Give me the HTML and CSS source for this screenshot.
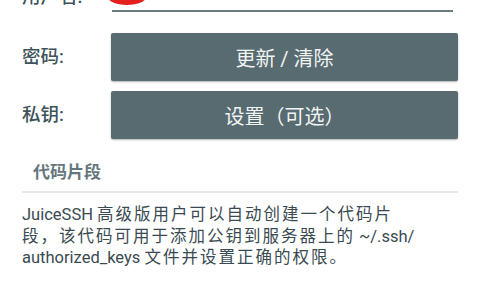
FILE: index.html
```html
<!DOCTYPE html>
<html lang="zh-CN">
<head>
<meta charset="utf-8">
<link rel="stylesheet" href="styles.css">
</head>
<body>
<div class="screen">
  <div class="row user">
    <div class="label">用户名:</div>
    <div class="field"><span class="redact"></span></div>
  </div>
  <div class="row">
    <div class="label">密码:</div>
    <button class="btn">更新 / 清除</button>
  </div>
  <div class="row">
    <div class="label">私钥:</div>
    <button class="btn">设置（可选）</button>
  </div>
  <div class="section">代码片段</div>
  <p class="desc">JuiceSSH <span class="cjk">高级版用户可以自动创建一个代码片</span><br><span class="cjk">段，该代码可用于添加公钥到服务器上的</span> ~/.ssh/<br>authorized_keys <span class="cjk">文件并设置正确的权限。</span></p>
  <button class="btn wide"></button>
</div>
</body>
</html>
```
FILE: styles.css
```css
html, body {
  margin: 0;
  padding: 0;
  background: #ffffff;
  overflow: hidden;
}
.screen {
  width: 480px;
  height: 300px;
  padding: 0 22px;
  box-sizing: border-box;
  font-family: Roboto, "Noto Sans CJK SC", sans-serif;
}
.row {
  display: grid;
  grid-template-columns: 89px 1fr;
  align-items: center;
  margin-bottom: 10px;
}
.row.user {
  height: 38px;
  margin-top: -26px;
  margin-bottom: 21px;
  align-items: stretch;
}
.label {
  font-size: 18.5px;
  line-height: 22px;
  color: #3f535b;
  font-weight: 500;
}
.user .label {
  align-self: end;
  margin-bottom: 4px;
}
.field {
  position: relative;
  margin: 0 5px 0 1px;
  border-bottom: 2px solid #6a7b80;
}
.redact {
  position: absolute;
  left: -5px;
  top: 12px;
  width: 40px;
  height: 19px;
  border-radius: 50%;
  background: #e3201f;
}
.btn {
  display: block;
  width: 100%;
  height: 48px;
  border: 0;
  border-radius: 2px;
  background: #576b71;
  box-shadow: 0 1px 2px rgba(0, 0, 0, 0.3);
  color: #f1f4f4;
  font-family: Roboto, "Noto Sans CJK SC", sans-serif;
  font-size: 20px;
  padding: 0;
}
.section {
  margin-top: 22px;
  padding: 0 0 8px 11px;
  font-size: 17px;
  line-height: 22px;
  font-weight: 700;
  color: #66767c;
  border-bottom: 2px solid #e6e9e9;
}
.desc {
  margin: 11px 0 0;
  font-size: 16.5px;
  line-height: 21.5px;
  color: #3a4a51;
}
.cjk {
  letter-spacing: 2px;
}
.btn.wide {
  margin-top: 24px;
  margin-left: -1px;
  width: calc(100% + 2px);
}
```
